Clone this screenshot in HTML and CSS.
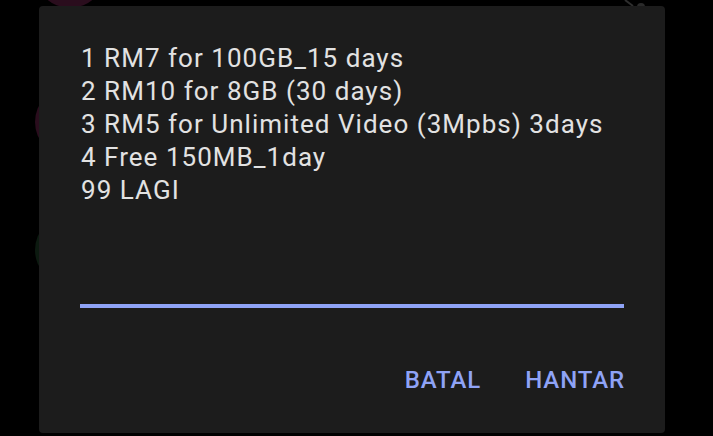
FILE: index.html
```html
<!DOCTYPE html>
<html>
<head>
<meta charset="utf-8">
<link rel="stylesheet" href="styles.css">
</head>
<body>
<div class="screen">
  <div class="bg-icon bg-top"></div>
  <div class="bg-icon bg-left"></div>
  <div class="bg-icon bg-green"></div>
  <svg class="bg-stroke" width="50" height="10" viewBox="0 0 50 10">
    <path d="M25 0 L33 6" stroke="#2e2e2e" stroke-width="2" fill="none"/>
    <circle cx="41" cy="7" r="4" fill="#2a2a2a"/>
  </svg>
  <div class="dialog">
    <div class="message">
      <div>1 RM7 for 100GB_15 days</div>
      <div>2 RM10 for 8GB (30 days)</div>
      <div>3 RM5 for Unlimited Video (3Mpbs) 3days</div>
      <div>4 Free 150MB_1day</div>
      <div>99 LAGI</div>
    </div>
    <div class="input"></div>
    <div class="actions">
      <span class="btn">BATAL</span>
      <span class="btn">HANTAR</span>
    </div>
  </div>
</div>
</body>
</html>
```
FILE: styles.css
```css
html, body {
  margin: 0;
  padding: 0;
  background: #000;
}
.screen {
  position: relative;
  width: 713px;
  height: 436px;
  overflow: hidden;
  padding-top: 6px;
  box-sizing: border-box;
}
.bg-icon {
  position: absolute;
  width: 70px;
  height: 70px;
  border-radius: 50%;
}
.bg-top {
  left: 35px;
  top: -62px;
  background: #2a0d1d;
}
.bg-left {
  left: 35px;
  top: 87px;
  background: #2a0d1d;
}
.bg-green {
  left: 35px;
  top: 215px;
  background: #0c1a10;
}
.bg-stroke {
  position: absolute;
  left: 600px;
  top: 0;
}
.dialog {
  position: relative;
  margin-left: 39px;
  width: 626px;
  height: 427px;
  background: #1c1c1c;
  border-radius: 4px;
  box-sizing: border-box;
  padding: 36px 41px 0 42px;
  font-family: Roboto, "Liberation Sans", sans-serif;
}
.message {
  color: #e2e2e2;
  font-size: 26px;
  line-height: 33px;
  letter-spacing: 1.03px;
  height: 262px;
  white-space: nowrap;
}
.input {
  height: 3.5px;
  background: #8fa3f6;
  margin-left: -1px;
}
.actions {
  display: flex;
  justify-content: flex-end;
  gap: 44px;
  margin-top: 59px;
  margin-right: -1px;
}
.btn {
  color: #8fa3f6;
  font-size: 24px;
  font-weight: 500;
  letter-spacing: 0.9px;
  line-height: 27px;
}
```
